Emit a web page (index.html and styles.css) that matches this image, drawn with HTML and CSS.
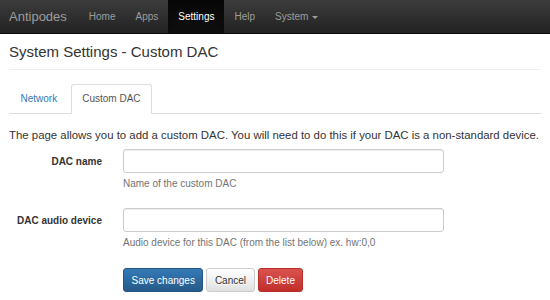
FILE: index.html
```html
<!DOCTYPE html>
<html>
<head>
<meta charset="utf-8">
<link rel="stylesheet" href="styles.css">
</head>
<body>
<nav class="navbar">
  <a class="brand">Antipodes</a>
  <ul class="nav">
    <li><a>Home</a></li>
    <li><a>Apps</a></li>
    <li class="active"><a>Settings</a></li>
    <li><a>Help</a></li>
    <li><a>System <span class="caret"></span></a></li>
  </ul>
</nav>
<div class="container">
  <div class="page-header"><h3>System Settings - Custom DAC</h3></div>
  <ul class="tabs">
    <li><a>Network</a></li>
    <li class="active"><a>Custom DAC</a></li>
  </ul>
  <p class="intro">The page allows you to add a custom DAC. You will need to do this if your DAC is a non-standard device.</p>
  <form class="form">
    <div class="row">
      <label class="label">DAC name</label>
      <div class="field">
        <input class="input" type="text">
        <span class="help">Name of the custom DAC</span>
      </div>
    </div>
    <div class="row">
      <label class="label">DAC audio device</label>
      <div class="field">
        <input class="input" type="text">
        <span class="help">Audio device for this DAC (from the list below) ex. hw:0,0</span>
      </div>
    </div>
    <div class="row">
      <div class="label"></div>
      <div class="field buttons">
        <button type="button" class="btn btn-primary">Save changes</button>
        <button type="button" class="btn btn-default">Cancel</button>
        <button type="button" class="btn btn-danger">Delete</button>
      </div>
    </div>
  </form>
</div>
</body>
</html>
```
FILE: styles.css
```css
html, body {
  margin: 0;
  padding: 0;
  background: #fff;
}
body {
  font-family: "Liberation Sans", Arial, sans-serif;
  font-size: 10px;
  color: #333;
}
.navbar {
  display: flex;
  align-items: stretch;
  height: 34px;
  background: linear-gradient(to bottom, #3c3c3c 0%, #222 100%);
  border-bottom: 1px solid #0a0a0a;
  box-sizing: border-box;
}
.brand {
  color: #9d9d9d;
  font-size: 13px;
  line-height: 33px;
  padding: 0 12px 0 9px;
}
.nav {
  display: flex;
  list-style: none;
  margin: 0;
  padding: 0;
}
.nav li a {
  display: block;
  color: #9d9d9d;
  font-size: 10px;
  line-height: 33px;
  padding: 0 10px;
}
.nav li.active a {
  color: #fff;
  background: linear-gradient(to bottom, #080808 0%, #0f0f0f 100%);
  box-shadow: inset 0 3px 9px rgba(0,0,0,0.25);
}
.caret {
  display: inline-block;
  width: 0;
  height: 0;
  margin-left: 1px;
  vertical-align: middle;
  border-top: 3px solid #9d9d9d;
  border-left: 3px solid transparent;
  border-right: 3px solid transparent;
}
.container {
  padding: 0 9px;
}
.page-header {
  border-bottom: 1px solid #eee;
  padding-bottom: 8px;
  margin-top: 9px;
}
.page-header h3 {
  margin: 0;
  font-size: 15px;
  font-weight: 400;
  line-height: 18px;
  color: #333;
}
.tabs {
  display: flex;
  list-style: none;
  margin: 14px 0 0;
  padding: 0;
  border-bottom: 1px solid #ddd;
}
.tabs li {
  margin-bottom: -1px;
}
.tabs li a {
  display: block;
  padding: 0 10.5px;
  line-height: 28px;
  border: 1px solid transparent;
  border-radius: 3px 3px 0 0;
  color: #337ab7;
  margin-right: 2px;
}
.tabs li.active a {
  color: #555;
  background: #fff;
  border-color: #ddd #ddd transparent;
}
.intro {
  margin: 14px 0 0;
  font-size: 11.4px;
  line-height: 15px;
}
.form {
  margin-top: 6px;
}
.row {
  display: flex;
  margin-bottom: 17px;
}
.label {
  width: 93px;
  flex: none;
  text-align: right;
  font-weight: 700;
  line-height: 15px;
  padding-top: 5px;
  padding-right: 21px;
  white-space: nowrap;
}
.field {
  display: flex;
  flex-direction: column;
}
.input {
  box-sizing: border-box;
  width: 321px;
  height: 24px;
  border: 1px solid #ccc;
  border-radius: 3px;
  box-shadow: inset 0 1px 1px rgba(0,0,0,0.075);
  margin: 0;
  font: inherit;
}
.help {
  color: #737373;
  font-size: 10px;
  margin-top: 4px;
  line-height: 14px;
}
.buttons {
  flex-direction: row;
  gap: 3px;
  margin-top: 1px;
}
.btn {
  font: inherit;
  height: 24px;
  padding: 0 7.5px;
  border-radius: 3px;
  border: 1px solid;
  cursor: pointer;
}
.btn-primary {
  color: #fff;
  background: linear-gradient(to bottom, #337ab7 0%, #265a88 100%);
  border-color: #245580;
}
.btn-default {
  color: #333;
  background: linear-gradient(to bottom, #fff 0%, #e0e0e0 100%);
  border-color: #ccc;
  text-shadow: 0 1px 0 #fff;
}
.btn-danger {
  color: #fff;
  background: linear-gradient(to bottom, #d9534f 0%, #c12e2a 100%);
  border-color: #b92c28;
}
```
